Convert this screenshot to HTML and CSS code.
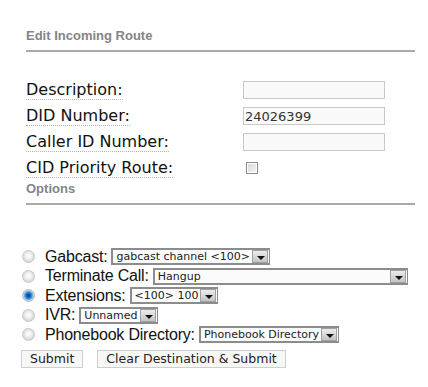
FILE: index.html
```html
<!DOCTYPE html>
<html lang="en">
<head>
  <meta charset="UTF-8">
  <title>Edit Incoming Route</title>
  <link rel="stylesheet" href="styles.css">
</head>
<body>
  <div class="page">
    <h2 class="section-title">Edit Incoming Route</h2>

    <div class="fields">
      <span class="field-label">Description:</span>
      <input class="text-input" type="text" value="">
      <span class="field-label">DID Number:</span>
      <input class="text-input" type="text" value="24026399">
      <span class="field-label">Caller ID Number:</span>
      <input class="text-input" type="text" value="">
      <span class="field-label">CID Priority Route:</span>
      <span class="check-cell"><span class="check-box"></span></span>
    </div>

    <h2 class="section-title">Options</h2>

    <ul class="dest-list">
      <li class="dest-row">
        <span class="radio"></span>
        <span class="dest-label">Gabcast:</span>
        <span class="drop"><span class="drop-text">gabcast channel &lt;100&gt;</span><span class="drop-btn"></span></span>
      </li>
      <li class="dest-row">
        <span class="radio"></span>
        <span class="dest-label">Terminate Call:</span>
        <span class="drop drop-wide"><span class="drop-text">Hangup</span><span class="drop-btn"></span></span>
      </li>
      <li class="dest-row">
        <span class="radio checked"></span>
        <span class="dest-label">Extensions:</span>
        <span class="drop"><span class="drop-text">&lt;100&gt; 100</span><span class="drop-btn"></span></span>
      </li>
      <li class="dest-row">
        <span class="radio"></span>
        <span class="dest-label">IVR:</span>
        <span class="drop"><span class="drop-text">Unnamed</span><span class="drop-btn"></span></span>
      </li>
      <li class="dest-row">
        <span class="radio"></span>
        <span class="dest-label">Phonebook Directory:</span>
        <span class="drop"><span class="drop-text">Phonebook Directory</span><span class="drop-btn"></span></span>
      </li>
    </ul>

    <div class="actions">
      <button class="btn" type="button">Submit</button>
      <button class="btn" type="button">Clear Destination &amp; Submit</button>
    </div>
  </div>
</body>
</html>
```

FILE: styles.css
```css
*{
  margin:0;
  padding:0;
  box-sizing:border-box;
}
body{
  background:#fff;
  font-family:"DejaVu Sans", Verdana, sans-serif;
  color:#111;
}
.page{
  padding:28px 13px 0 21px;
}
.section-title{
  margin-left:5px;
  font-family:"Liberation Sans", Arial, sans-serif;
  font-size:13px;
  line-height:15px;
  font-weight:bold;
  color:#838588;
  padding-bottom:7px;
  border-bottom:2px solid #a9a9a9;
}
.fields{
  display:grid;
  grid-template-columns:217px 142px;
  grid-auto-rows:26px;
  align-items:center;
  margin:25px 0 0 5px;
}
.field-label{
  justify-self:start;
  font-size:16px;
  line-height:19px;
  color:#111;
  border-bottom:1px dotted #b5b5b5;
}
.text-input{
  width:142px;
  height:18px;
  border:1px solid #c8c8c8;
  background:#f9f9f9;
  font-family:"DejaVu Sans", Verdana, sans-serif;
  font-size:13px;
  color:#333;
  padding:0 1px;
  outline:none;
}
.check-cell{
  display:flex;
  align-items:center;
  padding-left:3px;
}
.check-box{
  width:12px;
  height:12px;
  border:1px solid #8a8a8a;
  background:linear-gradient(135deg,#d8d8d8,#f6f6f6);
  box-shadow:inset 0 0 0 1px #fff;
}
.dest-list{
  list-style:none;
  margin-top:42px;
}
.dest-row{
  display:flex;
  align-items:center;
  height:19.5px;
  font-family:"Liberation Sans", Arial, sans-serif;
  font-size:16px;
}
.radio{
  width:13px;
  height:13px;
  margin:0 10px 0 1px;
  border-radius:50%;
  border:1px solid #c8c8c8;
  background:radial-gradient(circle at 50% 45%,#ffffff 0,#efefef 3px,#d6d6d6 6px);
}
.radio.checked{
  border-color:#b8b8b8;
  background:radial-gradient(circle at 50% 50%,#0b3b78 0,#1766b8 2px,#3b94e6 3.5px,#b9d2ea 5px,#e8e8e8 6px);
}
.dest-label{
  letter-spacing:-0.2px;
  margin-right:4px;
  white-space:nowrap;
}
.drop{
  display:inline-flex;
  align-items:center;
  height:17px;
  border:2px solid #8c8c8c;
  border-right-width:1px;
  background:#fbfbfb;
  font-family:"DejaVu Sans", Verdana, sans-serif;
  font-size:11px;
  color:#222;
}
.drop-text{
  flex:1;
  padding:0 2px 0 3px;
  white-space:nowrap;
}
.drop-wide{
  width:255px;
}
.drop-btn{
  position:relative;
  width:16px;
  height:13px;
  margin-right:1px;
  background:linear-gradient(#ececec,#c4c4c4);
  border:1px solid #a0a0a0;
}
.drop-btn::after{
  content:"";
  position:absolute;
  left:4px;
  bottom:2px;
  border-left:4px solid transparent;
  border-right:4px solid transparent;
  border-top:4px solid #111;
}
.actions{
  display:flex;
  gap:14px;
  margin-top:5px;
}
.btn{
  height:18px;
  padding:0 8px;
  border:1px solid #cfcfcf;
  background:#f7f7f7;
  font-family:"DejaVu Sans", Verdana, sans-serif;
  font-size:12.5px;
  color:#222;
}
```
